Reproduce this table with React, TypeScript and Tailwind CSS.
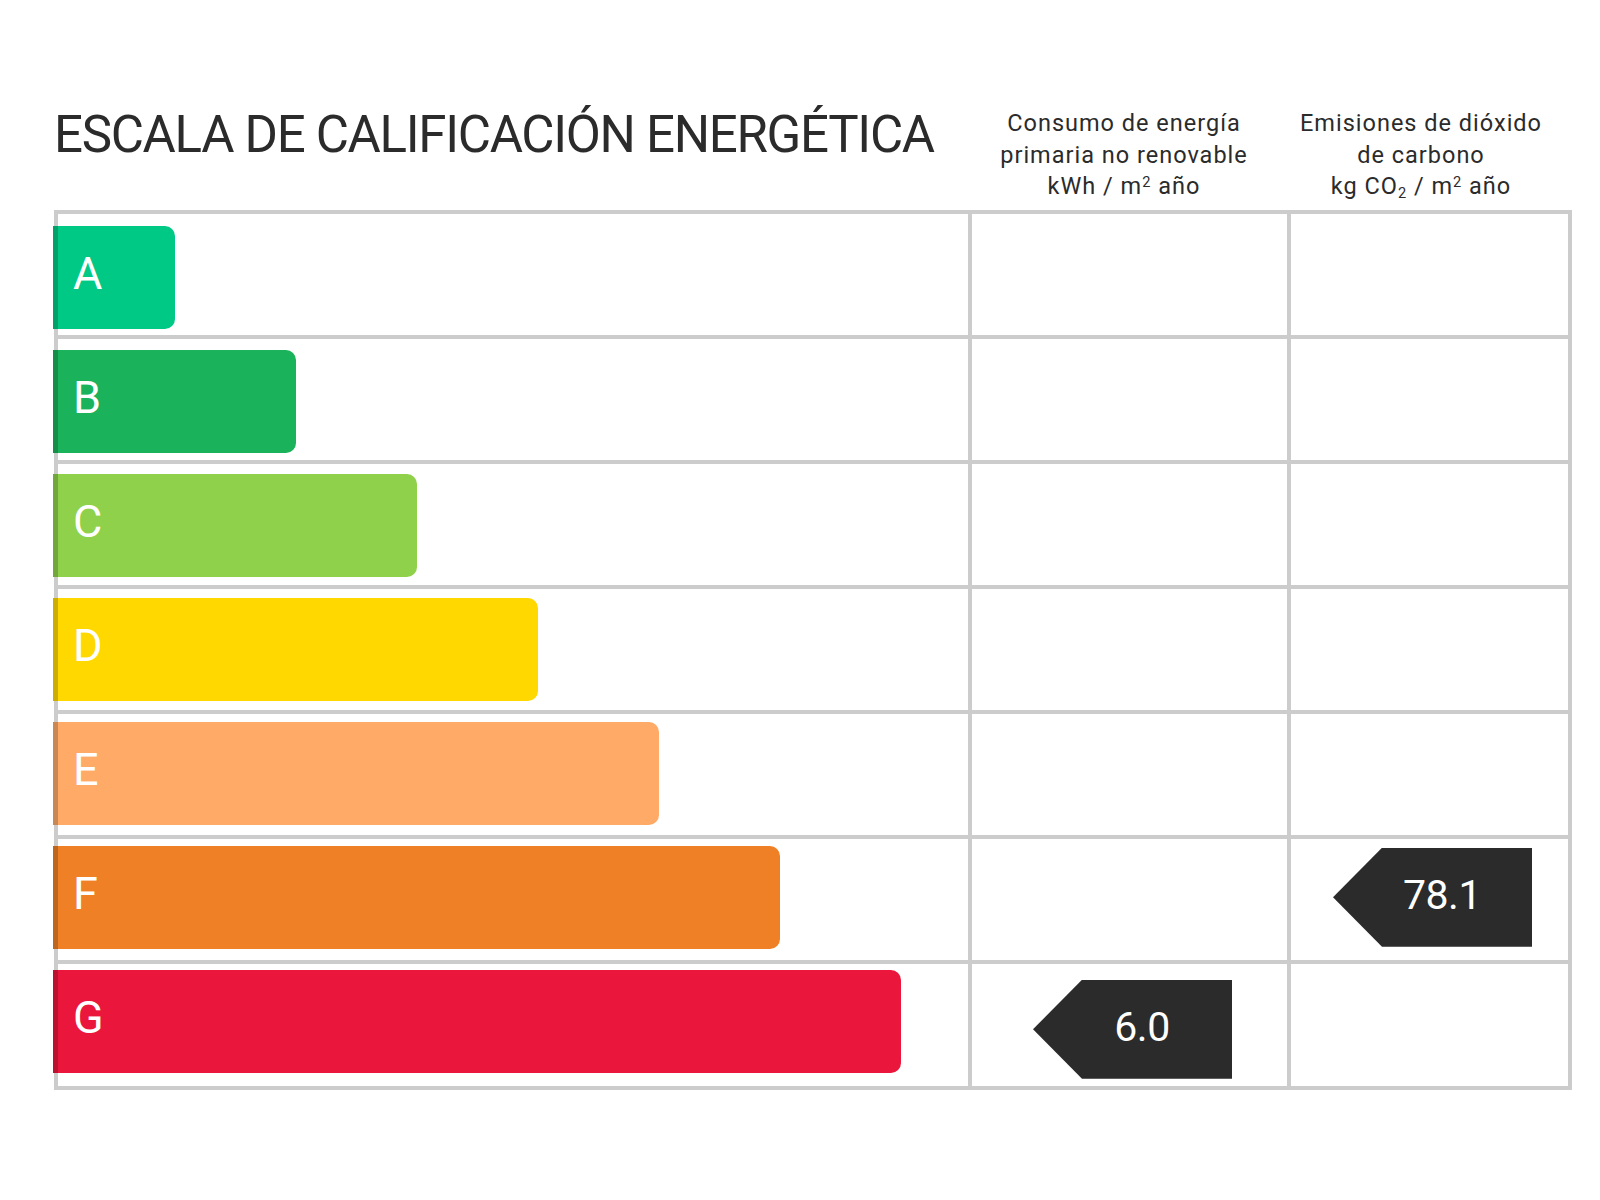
import React from "react";

type Row = {
  letter: string;
  width: string;
  mt: string;
  bar: string;
};

const rows: Row[] = [
  { letter: "A", width: "w-[122px]", mt: "mt-[12px]", bar: "bg-[#00c986] border-[#00a16b]" },
  { letter: "B", width: "w-[243px]", mt: "mt-[11px]", bar: "bg-[#1ab25a] border-[#158e48]" },
  { letter: "C", width: "w-[364px]", mt: "mt-[10px]", bar: "bg-[#8fd14a] border-[#72a73b]" },
  { letter: "D", width: "w-[485px]", mt: "mt-[9px]", bar: "bg-[#ffd800] border-[#ccad00]" },
  { letter: "E", width: "w-[606px]", mt: "mt-[8px]", bar: "bg-[#ffaa66] border-[#cc8852]" },
  { letter: "F", width: "w-[727px]", mt: "mt-[7px]", bar: "bg-[#ef8026] border-[#bf661e]" },
  { letter: "G", width: "w-[848px]", mt: "mt-[6px]", bar: "bg-[#ea163b] border-[#bb122f]" },
];

function Marker({ value, className }: { value: string; className: string }) {
  return (
    <div
      className={`${className} w-[199px] h-[99px] bg-[#2b2b2b] flex items-center justify-center pl-[19px] [clip-path:polygon(49px_0,100%_0,100%_100%,49px_100%,0_50%)]`}
    >
      <span className="mb-[4px] text-white text-[41px] leading-none tracking-[-0.5px]">{value}</span>
    </div>
  );
}

export default function App() {
  return (
    <div className="w-[1600px] h-[1200px] bg-white pt-[106px] pl-[54px] font-['Roboto',sans-serif] text-[#2b2b2b]">
      <div className="flex w-[1518px] items-start">
        <div className="w-[914px] pt-[3px]">
          <h1 className="text-[51px] leading-[51px] tracking-[-1.3px] font-normal whitespace-nowrap">
            ESCALA DE CALIFICACIÓN ENERGÉTICA
          </h1>
        </div>
        <div className="w-[312px] pt-[2px] text-center text-[23.5px] leading-[31.6px] tracking-[1px]">
          <div>Consumo de energía</div>
          <div>primaria no renovable</div>
          <div>
            kWh / m<sup className="text-[0.62em]">2</sup> año
          </div>
        </div>
        <div className="w-[282px] pt-[2px] text-center text-[23.5px] leading-[31.6px] tracking-[1px]">
          <div>Emisiones de dióxido</div>
          <div>de carbono</div>
          <div>
            kg CO<sub className="text-[0.62em]">2</sub> / m<sup className="text-[0.62em]">2</sup> año
          </div>
        </div>
      </div>

      <div className="mt-[7px] w-[1518px] grid grid-cols-[910px_315px_277px] grid-rows-[121px_121px_121px_121px_121px_121px_122px] gap-[4px] p-[4px] bg-[#cccccc]">
        {rows.map((r) => (
          <React.Fragment key={r.letter}>
            <div className="bg-white">
              <div
                className={`${r.mt} ${r.width} ${r.bar} -ml-[5px] h-[103px] rounded-r-[10px] border-l-[5px] flex items-center pl-[15px]`}
              >
                <span className="mb-[7px] text-white text-[45px] leading-none">{r.letter}</span>
              </div>
            </div>
            <div className="bg-white">
              {r.letter === "G" && <Marker value="6.0" className="ml-[61px] mt-[16px]" />}
            </div>
            <div className="bg-white">
              {r.letter === "F" && <Marker value="78.1" className="ml-[42px] mt-[9px]" />}
            </div>
          </React.Fragment>
        ))}
      </div>
    </div>
  );
}
